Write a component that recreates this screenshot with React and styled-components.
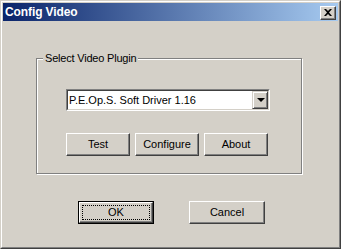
import React from 'react';
import styled, { createGlobalStyle } from 'styled-components';

const GlobalStyle = createGlobalStyle`
  html, body { margin: 0; padding: 0; background: #d4d0c8; }
  * { box-sizing: border-box; }
`

const Window = styled.div`
  width: 341px;
  height: 249px;
  background: #d4d0c8;
  border-top: 1px solid #d4d0c8;
  border-left: 1px solid #d4d0c8;
  border-right: 1px solid #404040;
  border-bottom: 1px solid #404040;
  font-family: "Liberation Sans", Arial, sans-serif;
  font-size: 11px;
  color: #000;
  display: flex;
  flex-direction: column;
`

const Inner = styled.div`
  flex: 1;
  border-top: 1px solid #fff;
  border-left: 1px solid #fff;
  border-right: 1px solid #808080;
  border-bottom: 1px solid #808080;
  padding: 1px;
  display: flex;
  flex-direction: column;
`

const TitleBar = styled.div`
  height: 18px;
  background: linear-gradient(to right, #0a246a, #a6caf0);
  display: flex;
  align-items: center;
  justify-content: space-between;
  padding: 0 2px 0 2px;
`

const Title = styled.span`
  color: #fff;
  font-weight: bold;
  font-size: 12px;
  letter-spacing: -0.1px;
`

const CloseButton = styled.div`
  width: 16px;
  height: 14px;
  background: #d4d0c8;
  border-top: 1px solid #fff;
  border-left: 1px solid #fff;
  border-right: 1px solid #404040;
  border-bottom: 1px solid #404040;
  box-shadow: inset -1px -1px 0 #808080;
  display: flex;
  align-items: center;
  justify-content: center;
  margin-top: 1px;
`

const Body = styled.div`
  flex: 1;
  display: flex;
  flex-direction: column;
`

const Group = styled.div`
  position: relative;
  margin: 37px 0 0 33px;
  width: 266px;
  height: 116px;
  border: 1px solid #808080;
  box-shadow: inset 1px 1px 0 #fff, 1px 1px 0 #fff;
  padding: 30px 0 0 29px;
  display: flex;
  flex-direction: column;
`

const GroupLabel = styled.span`
  position: absolute;
  left: 6px;
  top: -8px;
  padding: 0 2px 0 2px;
  background: #d4d0c8;
  line-height: 14px;
  letter-spacing: -0.2px;
`

const Combo = styled.div`
  width: 204px;
  height: 22px;
  border-top: 1px solid #808080;
  border-left: 1px solid #808080;
  border-right: 1px solid #fff;
  border-bottom: 1px solid #fff;
  display: flex;
`

const ComboInner = styled.div`
  flex: 1;
  background: #fff;
  border-top: 1px solid #404040;
  border-left: 1px solid #404040;
  border-right: 1px solid #d4d0c8;
  border-bottom: 1px solid #d4d0c8;
  display: flex;
  align-items: center;
`

const ComboText = styled.span`
  flex: 1;
  padding-left: 1px;
  font-size: 11px;
`

const DropButton = styled.div`
  width: 16px;
  height: 18px;
  background: #d4d0c8;
  border-top: 1px solid #d4d0c8;
  border-left: 1px solid #d4d0c8;
  border-right: 1px solid #404040;
  border-bottom: 1px solid #404040;
  box-shadow: inset 1px 1px 0 #fff, inset -1px -1px 0 #808080;
  display: flex;
  align-items: center;
  justify-content: center;
`

const Arrow = styled.div`
  width: 0;
  height: 0;
  border-left: 4px solid transparent;
  border-right: 4px solid transparent;
  border-top: 4px solid #000;
  margin-left: 1px;
`

const ButtonRow = styled.div`
  display: flex;
  gap: ${p => p.gap}px;
  margin-top: ${p => p.top}px;
  margin-left: ${p => p.left || 0}px;
`

const Button = styled.div`
  width: ${p => p.w}px;
  height: 23px;
  background: #d4d0c8;
  border-top: 1px solid #fff;
  border-left: 1px solid #fff;
  border-right: 1px solid #404040;
  border-bottom: 1px solid #404040;
  box-shadow: inset -1px -1px 0 #808080;
  display: flex;
  align-items: center;
  justify-content: center;
  font-size: 11px;
  padding-bottom: 1px;
`

const DefaultButton = styled.div`
  width: ${p => p.w}px;
  height: 23px;
  border: 1px solid #000;
  display: flex;
`

const DefaultFace = styled.div`
  flex: 1;
  background: #d4d0c8;
  border-top: 1px solid #fff;
  border-left: 1px solid #fff;
  border-right: 1px solid #404040;
  border-bottom: 1px solid #404040;
  box-shadow: inset -1px -1px 0 #808080;
  padding: 2px;
  display: flex;
`

const FocusRect = styled.div`
  flex: 1;
  border: 1px dotted #000;
  display: flex;
  align-items: center;
  justify-content: center;
  font-size: 11px;
  padding-bottom: 1px;
`

export default function App() {
  return (
    <>
      <GlobalStyle />
      <Window>
        <Inner>
          <TitleBar>
            <Title>Config Video</Title>
            <CloseButton>
              <svg width="8" height="7" viewBox="0 0 8 7">
                <path d="M0 0h2l2 2 2-2h2L5 3.5 8 7H6L4 5 2 7H0l3-3.5z" fill="#000" />
              </svg>
            </CloseButton>
          </TitleBar>
          <Body>
            <Group>
              <GroupLabel>Select Video Plugin</GroupLabel>
              <Combo>
                <ComboInner>
                  <ComboText>P.E.Op.S. Soft Driver 1.16</ComboText>
                  <DropButton><Arrow /></DropButton>
                </ComboInner>
              </Combo>
              <ButtonRow gap={5} top={22}>
                <Button w={64}>Test</Button>
                <Button w={64}>Configure</Button>
                <Button w={64}>About</Button>
              </ButtonRow>
            </Group>
            <ButtonRow gap={35} top={27} left={75}>
              <DefaultButton w={76}>
                <DefaultFace>
                  <FocusRect>OK</FocusRect>
                </DefaultFace>
              </DefaultButton>
              <Button w={76}>Cancel</Button>
            </ButtonRow>
          </Body>
        </Inner>
      </Window>
    </>
  );
}
